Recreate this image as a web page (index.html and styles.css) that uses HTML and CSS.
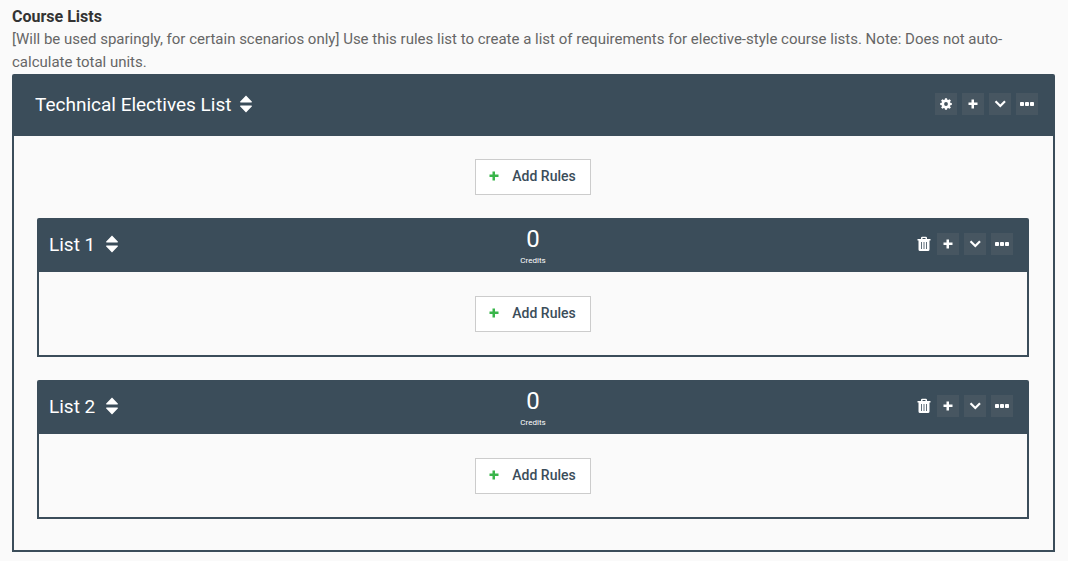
FILE: index.html
```html
<!DOCTYPE html>
<html lang="en">
<head>
<meta charset="utf-8">
<meta name="viewport" content="width=device-width, initial-scale=1">
<title>Course Lists</title>
<link rel="stylesheet" href="styles.css">
</head>
<body>
<svg class="sprite" aria-hidden="true">
  <symbol id="sort" viewBox="0 0 12 18"><path d="M6 0.5L12 6.7Q12 7.5 11.3 7.5H.7Q0 7.5 0 6.7ZM6 17.5L12 11.3Q12 10.5 11.3 10.5H.7Q0 10.5 0 11.3Z"/></symbol>
  <symbol id="plus" viewBox="0 0 12 12"><path d="M4.500 1.500h2.500v3H10.500v2.500H7v3.500H4.500V7H1.500V4.500h3z"/></symbol>
  <symbol id="chevron" viewBox="0 0 12 12"><path d="M1.500 3.300L6.300 8l4.700-4.700" fill="none" stroke="currentColor" stroke-width="2.200"/></symbol>
  <symbol id="dots" viewBox="0 0 14 12"><rect x="0" y="4" width="4" height="4" rx=".8"/><rect x="5" y="4" width="4" height="4" rx=".8"/><rect x="10" y="4" width="4" height="4" rx=".8"/></symbol>
  <symbol id="gear" viewBox="0 0 12 12"><path fill-rule="evenodd" d="M5 .2h2l.35 1.5.8.35L9.5 1.2l1.4 1.4-.9 1.3.3.8 1.5.3v2l-1.5.35-.3.8.9 1.3-1.4 1.4-1.35-.85-.8.3L7 11.8H5l-.35-1.5-.8-.3-1.35.85-1.4-1.4.9-1.3-.3-.8L.2 7V5l1.5-.3.3-.8-.9-1.3 1.4-1.4 1.35.85.8-.35zM6 4.1a1.9 1.9 0 1 0 0 3.8 1.9 1.9 0 0 0 0-3.8z"/></symbol>
  <symbol id="trash" viewBox="0 0 14 16"><path fill-rule="evenodd" d="M4 3V2Q4 .8 5.200.8h3.600Q10 .8 10 2v1h3.500v1.500h-1V13.500q0 1.500-1.500 1.500H3q-1.500 0-1.500-1.500V4.500h-1V3zM5.500 3h3V2h-3zM4 6v7h.8V6zM6.600 6v7h.8V6zM9.200 6v7h.8V6z"/></symbol>
</svg>
<main class="page">
  <h1 class="page-title">Course Lists</h1>
  <p class="page-note">[Will be used sparingly, for certain scenarios only] Use this rules list to create a list of requirements for elective-style course lists. Note: Does not auto-calculate total units.</p>

  <section class="panel">
    <header class="panel-head panel-head-main">
      <h2 class="panel-title">Technical Electives List <svg class="icon-sort"><use href="#sort"/></svg></h2>
      <div class="tools">
        <button class="tool" aria-label="Settings"><svg class="icon"><use href="#gear"/></svg></button>
        <button class="tool" aria-label="Add"><svg class="icon"><use href="#plus"/></svg></button>
        <button class="tool" aria-label="Collapse"><svg class="icon"><use href="#chevron"/></svg></button>
        <button class="tool" aria-label="More"><svg class="icon-dots"><use href="#dots"/></svg></button>
      </div>
    </header>
    <div class="panel-body">
      <button class="add"><svg class="icon icon-add"><use href="#plus"/></svg>Add Rules</button>

      <section class="panel">
        <header class="panel-head">
          <h3 class="panel-title">List 1 <svg class="icon-sort"><use href="#sort"/></svg></h3>
          <div class="credits"><span class="credits-count">0</span><span class="credits-label">Credits</span></div>
          <div class="tools">
            <button class="tool tool-trash" aria-label="Delete"><svg class="icon-trash"><use href="#trash"/></svg></button>
            <button class="tool" aria-label="Add"><svg class="icon"><use href="#plus"/></svg></button>
            <button class="tool" aria-label="Collapse"><svg class="icon"><use href="#chevron"/></svg></button>
            <button class="tool" aria-label="More"><svg class="icon-dots"><use href="#dots"/></svg></button>
          </div>
        </header>
        <div class="list-body"><button class="add"><svg class="icon icon-add"><use href="#plus"/></svg>Add Rules</button></div>
      </section>

      <section class="panel">
        <header class="panel-head">
          <h3 class="panel-title">List 2 <svg class="icon-sort"><use href="#sort"/></svg></h3>
          <div class="credits"><span class="credits-count">0</span><span class="credits-label">Credits</span></div>
          <div class="tools">
            <button class="tool tool-trash" aria-label="Delete"><svg class="icon-trash"><use href="#trash"/></svg></button>
            <button class="tool" aria-label="Add"><svg class="icon"><use href="#plus"/></svg></button>
            <button class="tool" aria-label="Collapse"><svg class="icon"><use href="#chevron"/></svg></button>
            <button class="tool" aria-label="More"><svg class="icon-dots"><use href="#dots"/></svg></button>
          </div>
        </header>
        <div class="list-body"><button class="add"><svg class="icon icon-add"><use href="#plus"/></svg>Add Rules</button></div>
      </section>
    </div>
  </section>
</main>
</body>
</html>
```
FILE: styles.css
```css
* { box-sizing: border-box; }

body {
  margin: 0;
  background: #fafafa;
  color: #666;
  font: 15px/23px Roboto, Arial, sans-serif;
}

.sprite { display: none; }
svg { fill: currentColor; flex: none; }
h1, h2, h3, p { margin: 0; }

.page { padding: 6px 13px 9px 12px; }
.page-title { color: #333; font-size: 16px; font-weight: 700; line-height: 22px; }

.panel {
  border: 2px solid #3b4d5a;
  border-radius: 2px 2px 0 0;
}

.panel-head {
  display: grid;
  grid-template-columns: 1fr auto 1fr;
  align-items: center;
  height: 52px;
  padding: 0 10px;
  background: #3b4d5a;
  color: #fff;
}
.panel-head-main {
  grid-template-columns: 1fr auto;
  height: 60px;
  padding: 0 11px 0 21px;
}

.panel-title {
  display: flex;
  align-items: center;
  gap: 11px;
  padding-bottom: 4px;
  font-size: 19px;
  font-weight: 400;
}
.panel-head-main .panel-title { gap: 9px; }

.credits {
  display: flex;
  flex-direction: column;
  align-items: center;
  padding-top: 2px;
}
.credits-count { font-size: 24px; line-height: 28px; }
.credits-label { font-size: 8px; line-height: 16px; }

.tools {
  display: flex;
  justify-content: flex-end;
  gap: 5px;
  padding: 0 4px 4px 0;
}
.tool {
  display: flex;
  align-items: center;
  justify-content: center;
  width: 22px;
  height: 22px;
  padding: 0;
  border: 0;
  background: #475661;
  color: #fff;
}
.tool-trash { width: 16px; background: none; }

.icon { width: 12px; height: 12px; }
.icon-sort { width: 12px; height: 18px; }
.icon-dots { width: 14px; height: 12px; }
.icon-trash { width: 14px; height: 16px; }
.icon-add { color: #39b54a; }

.panel-body {
  display: flex;
  flex-direction: column;
  gap: 23px;
  padding: 23px 24px 31px 23px;
}
.list-body { display: flex; padding: 24px 0 23px; }

.add {
  display: flex;
  align-items: center;
  align-self: center;
  gap: 12px;
  height: 36px;
  margin: 0 auto;
  padding: 0 14px 2px 12px;
  border: 1px solid #ccc;
  background: #fff;
  color: #3b4d5a;
  font: 500 14px/20px Roboto, Arial, sans-serif;
}
```
